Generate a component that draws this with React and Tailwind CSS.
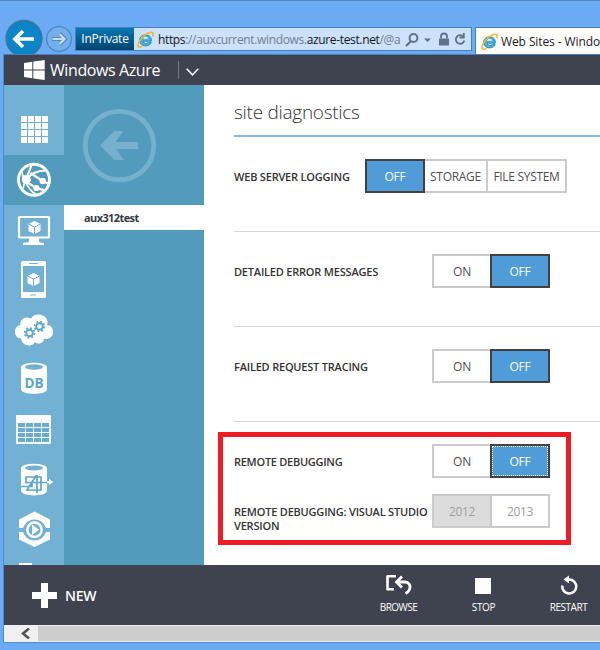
import React from "react";

const FONT = "font-['Open_Sans','Noto_Sans',sans-serif]";

function IeLogo({ className }) {
  return (
    <svg className={className} viewBox="0 0 16 16" fill="none">
      <path d="M13.600 9.600H6c.3 2.800 3.600 2.900 4.500 1.100h2.900C12 15.400 2.600 15.500 2.500 8.700 2.500 1.900 14.200 1.600 13.600 9.600Z" fill="#45aee3" stroke="#2583bd" strokeWidth="0.800" />
      <path d="M5.800 7.300c.3-2.600 4.300-2.600 4.700 0Z" fill="#eaf5ff" />
      <path d="M1.500 15.200C-.2 13 3.300 6.500 8 3.400 11.500 1 15.400 0 15.200 2.800c0 .8-.3 1.600-.7 2.300" stroke="#f3b91c" strokeWidth="1.500" />
      <path d="M1.500 15.200c1 .4 2.400-.1 3.700-.9" stroke="#f3b91c" strokeWidth="1.300" />
    </svg>
  );
}

function BrowserBar() {
  return (
    <div className="flex h-[54px] items-start overflow-hidden border-t border-[#5288c8] pl-[5px]">
      <svg className="mt-[18px] h-[36px] w-[70px] shrink-0" viewBox="0 0 70 36" fill="none">
        <circle cx="19" cy="19.500" r="18" fill="#0a85c5" stroke="#47709f" strokeWidth="1.300" />
        <path d="M29 20H10M18 12l-8 8 8 8" stroke="#fff" strokeWidth="3.700" />
        <circle cx="54" cy="20" r="12.400" fill="#73aeee" stroke="#5085bf" strokeWidth="1.200" />
        <path d="M47 20h12M54.500 14.500L60 20l-5.500 5.500" stroke="#5687bb" strokeWidth="4" />
        <path d="M47.500 20h11M54.500 15L59.500 20l-5 5" stroke="#c3dcf8" strokeWidth="2.200" />
      </svg>
      <div className="mt-[26px] flex h-[24px] w-[397px] shrink-0 items-center border border-[#4a7ebd] bg-[#cce1fb]">
        <div className="flex h-full w-[58px] items-center justify-center bg-gradient-to-b from-[#0879b5] to-[#03436f] text-[12px] tracking-[-0.25px] text-white">InPrivate</div>
        <IeLogo className="ml-[3px] h-[17px] w-[17px] shrink-0" />
        <div className="ml-[4px] w-[247px] whitespace-nowrap pt-px text-[12px] tracking-[-0.35px] text-[#6c7f95]">
          <span className="text-[#101820]">https</span>://auxcurrent.windows.<span className="text-[#101820]">azure-test.net</span>/@a
        </div>
        <svg className="h-[22px] w-[66px] shrink-0" viewBox="405 28 66 22" fill="none">
          <circle cx="413.500" cy="38" r="3.900" stroke="#5f7386" strokeWidth="2" />
          <path d="M411 41l-5 5" stroke="#5f7386" strokeWidth="2.300" />
          <path d="M424 38.500h7l-3.500 3.500z" fill="#5f7386" />
          <path d="M439 38.500h10v7h-10z" fill="#5f7386" />
          <path d="M441 38.500v-2a3 3 0 0 1 6 0v2" stroke="#5f7386" strokeWidth="1.800" />
          <path d="M463 36.300a4.300 4.300 0 1 0 1.300 4.200M463.800 33v4.500H459.500" stroke="#5f7386" strokeWidth="1.800" />
        </svg>
      </div>
      <div className="ml-[3px] mt-[26px] flex h-[28px] min-w-0 flex-1 items-center border-l border-t border-[#4a7ebd] bg-white pl-[5px]">
        <IeLogo className="h-[17px] w-[17px] shrink-0" />
        <span className="ml-[3px] whitespace-nowrap pt-px text-[12px] tracking-[-0.1px] text-[#1b1b1b]">Web Sites - Windows Azure</span>
      </div>
    </div>
  );
}

function PortalHeader() {
  return (
    <header className="flex h-[31px] shrink-0 items-center border-t border-[#4a7ebd] bg-[#3e434f]">
      <svg className="ml-[20px] h-[20px] w-[21px]" viewBox="0 0 21 20" fill="#fff">
        <path d="M0 3l8.300-1.200v7.700H0zM9.300 1.600L20.700 0v9.500H9.300zM0 10.500h8.300v7.700L0 17zM9.300 10.500h11.400V20L9.300 18.400z" />
      </svg>
      <span className="ml-[5px] w-[110px] whitespace-nowrap text-[16px] tracking-[-0.4px] text-white">Windows Azure</span>
      <span className="ml-[18px] h-[18px] w-px bg-[#747984]" />
      <svg className="ml-[7px] mt-[3px] h-[8px] w-[13px]" viewBox="0 0 13 8" fill="none">
        <path d="M.7.800l5.800 6 5.800-6" stroke="#fff" strokeWidth="1.500" />
      </svg>
    </header>
  );
}

function Cube({ x, y }) {
  return (
    <g transform={`translate(${x} ${y})`}>
      <path d="M0-6.500L6-3.500V3.500L0 6.500-6 3.500V-3.500z" fill="#fff" />
      <path d="M-6-3.500L0-.5l6-3M0-.5V6.500" stroke="#72b1d3" strokeWidth="1" />
    </g>
  );
}

function Gear({ x, y, r }) {
  return (
    <g transform={`translate(${x} ${y})`} stroke="#5ea5ca" fill="none">
      <circle r={r} strokeWidth="2" />
      <circle r={r + 1.600} strokeWidth="1.700" strokeDasharray="1.800 2.050" />
    </g>
  );
}

/* Each drawing sits on a 60 x 50 tile of the service rail. */
const railIcons = [
  <g key="all" fill="#fff">
    {[0, 7, 14, 21].map((y) => [0, 7, 14, 21].map((x) => <rect key={`${x}-${y}`} x={17 + x} y={11 + y} width="6" height="6" />))}
  </g>,
  <g key="web" stroke="#fff">
    <circle cx="30" cy="24.700" r="15.500" strokeWidth="2.900" />
    <path d="M21.500 25.500C26 19 32 15.500 42 15.500" strokeWidth="2.200" />
    <path d="M27.500 10c-.5 3-3 8-6 14.500" strokeWidth="2" />
    <path d="M26.500 18l12 8 5.500 2.500" strokeWidth="2.400" />
    <path d="M22 26.500l10 6.500 9 2.500" strokeWidth="2.400" />
    <path d="M18 15.500c0 4 1 7 3.500 10-1 3-2 5-2.500 8M21.500 26c2 6 5 10 10 13" strokeWidth="1.800" />
    <g fill="#fff" stroke="none"><circle cx="22.300" cy="24.500" r="4.600" /><circle cx="38.700" cy="26" r="3.200" /><circle cx="32.300" cy="33" r="3.100" /></g>
  </g>,
  <g key="vm">
    <rect x="15" y="12" width="30" height="20.500" rx=".5" stroke="#fff" strokeWidth="2.200" />
    <path d="M25 33h10v3c0 1.500 2 1.500 5 2v2H19v-2c3-.5 6-.5 6-2z" fill="#fff" />
    <Cube x={30.500} y={22.500} />
  </g>,
  <g key="mobile">
    <rect x="17" y="6" width="25" height="37" rx="1.500" fill="#fff" />
    <path d="M19 11h21v26H19z" fill="#72b1d3" />
    <path d="M25 8.500h9M26 40h6" stroke="#72b1d3" strokeWidth="1.200" />
    <Cube x={29.500} y={24.500} />
  </g>,
  <g key="cloud">
    <path d="M17 33.500c-4 0-6-3-6-6.500 0-4 2-6.500 5.500-7-1-6 5-9.500 10.500-6.500 3-6.500 15.500-5 16.500 3 .2 1.500 0 2.500-.5 3.500 4 0 6 3.200 6 7 0 5-4 7.500-9 7 0 4-6 6.500-9 3-3 6-13 4-14-3.500z" fill="#fff" />
    <Gear x={25.500} y={28} r={3.300} />
    <Gear x={35.500} y={21.500} r={3.300} />
  </g>,
  <g key="db">
    <path d="M17 12v22c0 6.500 26 6.500 26 0V12z" fill="#fff" />
    <ellipse cx="30" cy="12" rx="13" ry="4.300" fill="#fff" />
    <ellipse cx="30" cy="12" rx="9" ry="2.700" fill="#72b1d3" />
    <text x="30" y="32.700" textAnchor="middle" fontSize="13.500" fontWeight="700" fill="#5ea5ca">DB</text>
  </g>,
  <g key="table">
    <rect x="12" y="10" width="35" height="29" rx="1" fill="#fff" />
    <g fill="#68accf">
      {[18, 23, 28, 33].map((y) => [14, 22, 30, 38].map((x) => <rect key={`${x}-${y}`} x={x} y={y} width="7" height="4" />))}
    </g>
  </g>,
  <g key="bus">
    <path d="M17 13v22.500c0 6.500 26 6.500 26 0V13z" fill="#fff" />
    <ellipse cx="30" cy="13" rx="13" ry="4.300" fill="#fff" />
    <ellipse cx="30" cy="13" rx="9" ry="2.600" fill="#72b1d3" />
    <path d="M17 31.500h11v-3M22 28.500V22h15v13H27.500M22 27.500h21M33 20v18M32.500 20L23 35h5" stroke="#5ea5ca" strokeWidth="1.700" />
    <path d="M43 26.200h2v-2.500l4.200 3.300-4.200 3.300V28.200h-2z" fill="#fff" />
  </g>,
  <g key="media">
    <path d="M15 23v-8.500L30.500 6.500 46 14.500V23h-4a12 12 0 0 0-23 0zM15 27v7.500l15.500 7.500L46 34.500V27h-4a12 12 0 0 1-23 0z" fill="#fff" />
    <circle cx="30.500" cy="24.700" r="7.200" stroke="#fff" strokeWidth="2.500" />
    <path d="M28 19.500l7 5.200-7 5.200z" fill="#fff" />
  </g>,
];

function ServiceRail() {
  return (
    <nav className="flex w-[60px] shrink-0 flex-col overflow-hidden bg-[#72b1d3] pt-[20px]">
      {railIcons.map((icon, i) => (
        <div key={i} className={i === 1 ? "h-[50px] shrink-0 bg-[#529bbc]" : "h-[50px] shrink-0"}>
          <svg className="block h-[50px] w-[60px]" viewBox="0 0 60 50" fill="none">{icon}</svg>
        </div>
      ))}
      <div className="ml-[15px] mt-[8px] h-[8px] w-[13px] shrink-0 bg-white" />
    </nav>
  );
}

function SitePanel() {
  return (
    <aside className="w-[140px] shrink-0 bg-[#529bbc]">
      <svg className="ml-[18px] mt-[23px] block h-[75px] w-[75px]" viewBox="0 0 75 75" fill="none">
        <circle cx="37.500" cy="37.500" r="34.200" stroke="#75b0ce" strokeWidth="4.800" />
        <path d="M56 34v7H34l8 11h-9.500L18 37.500 32 23h9.500l-8 11z" fill="#75b0ce" />
      </svg>
      <div className="mt-[22px] flex h-[25px] items-center bg-white pl-[20px] pt-px text-[11px] font-bold tracking-[-0.6px] text-[#343b45]">aux312test</div>
    </aside>
  );
}

function Segment({ label, width, state }) {
  const styles = {
    first: "border-2 border-[#cbcbcb] bg-white text-[#505050]",
    plain: "border-y-2 border-r-2 border-[#cbcbcb] bg-white text-[#505050]",
    on: "border-2 border-[#414141] bg-[#4f9cd8] text-white",
    focus: "border-2 border-[#414141] bg-[#4f9cd8] text-white",
    muted: "border-y-2 border-r-2 border-[#cbcbcb] bg-white text-[#a0a0a0]",
    mutedOn: "border-2 border-[#cbcbcb] bg-[#dcdcdc] text-[#a0a0a0]",
  };
  return (
    <button className={`flex h-[34px] shrink-0 items-center justify-center whitespace-nowrap text-[12px] tracking-[-0.3px] ${width} ${styles[state]}`}>
      {state === "focus" ? (
        <span className="flex h-full w-full items-center justify-center border border-dotted border-white pt-[2px]">{label}</span>
      ) : (
        <span className="pt-[2px]">{label}</span>
      )}
    </button>
  );
}

function Label({ children, className }) {
  return <div className={`shrink-0 whitespace-nowrap pt-[11px] text-[11px] font-semibold leading-[14px] text-[#333] ${className}`}>{children}</div>;
}

function Diagnostics() {
  return (
    <main className="min-w-0 flex-1 overflow-hidden bg-white pl-[30px]">
      <h1 className="flex h-[52px] items-center border-b-2 border-[#82b7e2] pt-[4px] text-[19px] font-light tracking-[-0.28px] text-[#333]">site diagnostics</h1>
      <section className="flex h-[95px] items-start border-b border-[#d8d8d8] pt-[22px]">
        <Label className="w-[131px] tracking-[-0.2px]">WEB SERVER LOGGING</Label>
        <Segment label="OFF" width="w-[60px]" state="on" />
        <Segment label="STORAGE" width="w-[63px]" state="plain" />
        <Segment label="FILE SYSTEM" width="w-[79px]" state="plain" />
      </section>
      <section className="flex h-[95px] items-start border-b border-[#d8d8d8] pt-[22px]">
        <Label className="w-[198px] tracking-[-0.2px]">DETAILED ERROR MESSAGES</Label>
        <Segment label="ON" width="w-[60px]" state="first" />
        <div className="-ml-[2px]"><Segment label="OFF" width="w-[60px]" state="on" /></div>
      </section>
      <section className="flex h-[95px] items-start border-b border-[#d8d8d8] pt-[22px]">
        <Label className="w-[198px] tracking-[-0.2px]">FAILED REQUEST TRACING</Label>
        <Segment label="ON" width="w-[60px]" state="first" />
        <div className="-ml-[2px]"><Segment label="OFF" width="w-[60px]" state="on" /></div>
      </section>
      <section className="relative flex flex-col gap-[16px] pt-[22px]">
        <div className="flex items-start">
          <Label className="w-[198px] tracking-[-0.27px]">REMOTE DEBUGGING</Label>
          <Segment label="ON" width="w-[60px]" state="first" />
          <div className="-ml-[2px]"><Segment label="OFF" width="w-[60px]" state="focus" /></div>
        </div>
        <div className="flex h-[34px] items-start">
          <Label className="w-[198px] tracking-[-0.2px]">REMOTE DEBUGGING: VISUAL STUDIO<br />VERSION</Label>
          <Segment label="2012" width="w-[60px]" state="mutedOn" />
          <Segment label="2013" width="w-[58px]" state="muted" />
        </div>
        <div className="pointer-events-none absolute -left-[16px] top-[10px] h-[113px] w-[353px] border-[5px] border-[#ed1c24]" />
      </section>
    </main>
  );
}

function Command({ label, tracking, children }) {
  return (
    <div className="flex w-[85px] shrink-0 flex-col items-center pt-[8px] text-white">
      <svg className="h-[26px] w-[30px]" viewBox="0 0 30 26" fill="none">{children}</svg>
      <span className={`mt-[1px] text-[10px] leading-[14px] ${tracking}`}>{label}</span>
    </div>
  );
}

function CommandBar() {
  return (
    <footer className="flex h-[60px] shrink-0 overflow-hidden bg-[#3e434f]">
      <div className="flex w-[352px] shrink-0 items-center pl-[28px]">
        <svg className="h-[25px] w-[25px]" viewBox="0 0 25 25" fill="#fff"><path d="M9 0h7v9h9v7h-9v9H9v-9H0V9h9z" /></svg>
        <span className="ml-[8px] text-[14px] font-semibold tracking-[-0.3px] text-white">NEW</span>
      </div>
      <Command label="BROWSE" tracking="tracking-[-0.55px]">
        <path d="M12 3.200H3.500v13H10" stroke="#fff" strokeWidth="2.600" strokeLinejoin="round" />
        <path d="M12 9h9a4.800 4.800 0 0 1 5 5q0 4-4.500 6.500M18 3.500L12.500 9l5.500 5.500" stroke="#fff" strokeWidth="2.800" />
      </Command>
      <Command label="STOP" tracking="tracking-[-0.3px]">
        <rect x="6" y="5" width="16" height="16" fill="#fff" />
      </Command>
      <Command label="RESTART" tracking="tracking-[-0.45px]">
        <path d="M8.300 12.500a7 7 0 1 0 6.700-6" stroke="#fff" strokeWidth="2.500" />
        <path d="M9.500 6.500L15 2.500v8z" fill="#fff" />
      </Command>
    </footer>
  );
}

export default function App() {
  return (
    <div className={`flex h-[650px] w-[600px] flex-col overflow-hidden bg-[#6babf4] ${FONT}`}>
      <BrowserBar />
      <div className="ml-[3px] flex h-[589px] flex-col overflow-hidden border-b border-l border-[#4f8bd3]">
        <PortalHeader />
        <div className="flex h-[480px] shrink-0 overflow-hidden">
          <ServiceRail />
          <SitePanel />
          <Diagnostics />
        </div>
        <CommandBar />
        <div className="flex h-[17px] shrink-0 border-y border-[#f0f0f0] bg-[#cdcdcd]">
          <div className="flex w-[34px] items-center bg-[#f0f0f0] pl-[17px]">
            <svg className="h-[11px] w-[9px]" viewBox="0 0 9 11" fill="none"><path d="M8 .500L2 5.500l6 5" stroke="#505050" strokeWidth="2.500" /></svg>
          </div>
        </div>
      </div>
    </div>
  );
}
